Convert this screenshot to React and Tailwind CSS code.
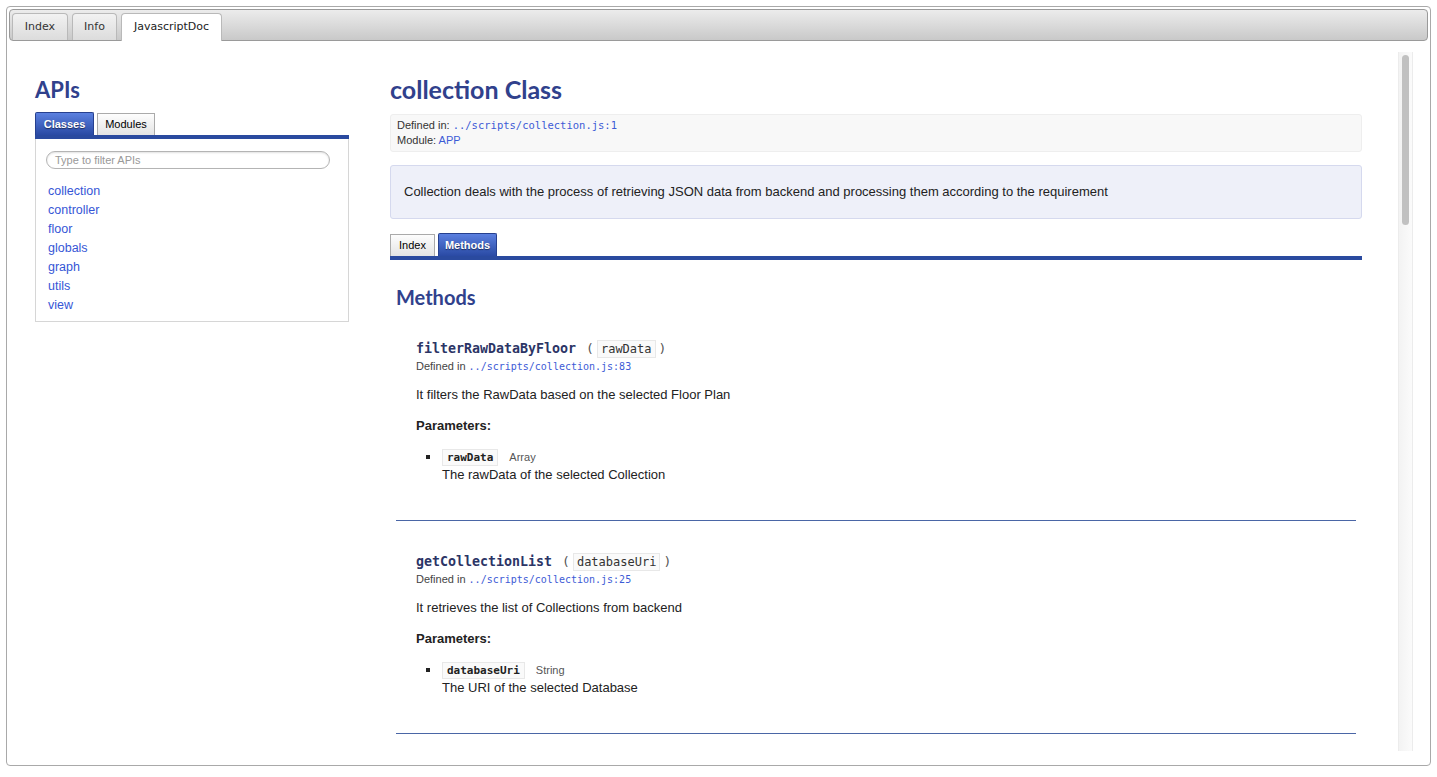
import React from 'react';

const classes = ['collection', 'controller', 'floor', 'globals', 'graph', 'utils', 'view'];

const methods = [
  {
    name: 'filterRawDataByFloor',
    param: 'rawData',
    line: '../scripts/collection.js:83',
    desc: 'It filters the RawData based on the selected Floor Plan',
    type: 'Array',
    paramDesc: 'The rawData of the selected Collection',
  },
  {
    name: 'getCollectionList',
    param: 'databaseUri',
    line: '../scripts/collection.js:25',
    desc: 'It retrieves the list of Collections from backend',
    type: 'String',
    paramDesc: 'The URI of the selected Database',
  },
];

const topTabs = [
  { label: 'Index', w: 'w-[56px]' },
  { label: 'Info', w: 'w-[45px]' },
];

const sans = { fontFamily: '"Liberation Sans", Arial, sans-serif' };
const mono = { fontFamily: '"DejaVu Sans Mono", "Liberation Mono", monospace' };
const heading = { fontFamily: 'Lato, "Open Sans", sans-serif' };
const verdana = { fontFamily: '"DejaVu Sans", Verdana, sans-serif' };

const BlueTab = ({ children, w }) => (
  <div
    className={`${w} h-[23px] flex items-center justify-center rounded-t-[2px] border border-b-0 border-[#26408f] bg-gradient-to-b from-[#5b80e0] to-[#2a4aa4] text-[11px] font-bold text-white [text-shadow:0_1px_1px_rgba(0,0,0,0.5)]`}
  >
    {children}
  </div>
);

const GrayTab = ({ children, w }) => (
  <div
    className={`${w} h-[22px] flex items-center justify-center border border-b-0 border-[#aaa] bg-gradient-to-b from-[#fdfdfd] to-[#e4e4e4] text-[11px] text-black`}
  >
    {children}
  </div>
);

const Method = ({ m, first }) => (
  <div>
    <div className={`pl-5 pb-[36px] ${first ? 'pt-0' : 'pt-[32px]'}`}>
      <div className="flex items-center h-[18px] text-[13px] text-[#333]">
        <span style={mono} className="font-bold text-[13.3px] text-[#2c3566]">{m.name}</span>
        <span style={mono} className="ml-[10px] mr-[3px] text-[#555]">(</span>
        <span style={mono} className="border border-[#e8e8e8] bg-[#fafafa] px-[3px] text-[12px] leading-[16px] text-[#333]">
          {m.param}
        </span>
        <span style={mono} className="ml-[3px] text-[#555]">)</span>
      </div>
      <div className="h-[14px] leading-[14px] text-[11px] text-[#444] mt-[1px]">
        Defined in <span style={mono} className="text-[10px] text-[#3d5bd6]">{m.line}</span>
      </div>
      <p className="mt-[13px] text-[13px] leading-[18px] text-[#222]">{m.desc}</p>
      <p className="mt-[13px] text-[13px] leading-[18px] font-bold text-[#222]">Parameters:</p>
      <div className="mt-[13px] pl-[10px] flex">
        <div className="w-[16px] pt-[7px]">
          <div className="w-[4px] h-[4px] bg-[#222]" />
        </div>
        <div>
          <div className="flex items-center h-[18px]">
            <span style={mono} className="border border-[#e8e8e8] bg-[#fafafa] px-[4px] text-[11px] leading-[15px] font-bold text-[#222]">
              {m.param}
            </span>
            <span className="ml-[11px] text-[11px] text-[#555]">{m.type}</span>
          </div>
          <p className="text-[13px] leading-[18px] text-[#222]">{m.paramDesc}</p>
        </div>
      </div>
    </div>
    <div className="h-px bg-[#4a66a6]" />
  </div>
);

export default function App() {
  return (
    <div style={sans} className="w-[1437px] h-[777px] bg-white p-[6px] pb-[11px]">
      <div className="h-full rounded-[4px] border border-[#a9a9a9] p-[2px] flex flex-col">
        <div className="h-[32px] shrink-0 rounded-[4px] border border-[#9a9a9a] bg-gradient-to-b from-[#ececec] to-[#c9c9c9] flex items-end pl-[2px] gap-[4px]">
          {topTabs.map(t => (
            <div
              key={t.label}
              style={verdana}
              className={`${t.w} h-[27px] flex items-center justify-center rounded-t-[4px] border border-b-0 border-[#b9b9b9] bg-gradient-to-b from-[#f2f2f2] to-[#dcdcdc] text-[11px] text-[#333]`}
            >
              {t.label}
            </div>
          ))}
          <div
            style={verdana}
            className="w-[101px] h-[28px] -mb-px flex items-center justify-center rounded-t-[4px] border border-b-0 border-[#b9b9b9] bg-white text-[11px] text-[#222]"
          >
            JavascriptDoc
          </div>
        </div>

        <div className="flex-1 flex pt-[11px] pb-[12px] pr-[15px] min-h-0">
          <div className="flex-1 overflow-hidden flex pl-[26px]">
            {/* left column */}
            <div className="w-[314px] shrink-0">
              <h2 style={heading} className="mt-[24px] text-[22px] leading-[28px] font-bold text-[#30418c]">APIs</h2>
              <div className="mt-[8px] flex items-end gap-[3px]">
                <BlueTab w="w-[59px]">Classes</BlueTab>
                <GrayTab w="w-[58px]">Modules</GrayTab>
              </div>
              <div className="h-[4px] bg-[#2a4a9f]" />
              <div className="h-[183px] border border-t-0 border-[#d6d6d6] px-[10px] pt-[12px]">
                <div className="w-[284px] h-[18px] rounded-full border border-[#b4b4b4] shadow-[inset_0_1px_2px_rgba(0,0,0,0.12)] flex items-center pl-[8px] text-[11px] text-[#999]">
                  Type to filter APIs
                </div>
                <ul className="mt-[13px] pl-[2px]">
                  {classes.map(c => (
                    <li key={c} className="text-[12.5px] leading-[19px] text-[#3656d6]">{c}</li>
                  ))}
                </ul>
              </div>
            </div>

            {/* right column */}
            <div className="w-[972px] shrink-0 ml-[41px]">
              <h1 style={heading} className="mt-[22px] text-[25px] leading-[30px] font-bold text-[#30418c]">collection Class</h1>
              <div className="mt-[10px] rounded-[3px] border border-[#eee] bg-[#f8f8f8] px-[6px] py-[3px] text-[11px] leading-[15px] text-[#333]">
                <div>
                  Defined in: <span style={mono} className="text-[10.5px] text-[#3d5bd6]">../scripts/collection.js:1</span>
                </div>
                <div>
                  Module: <span className="text-[#3d5bd6]">APP</span>
                </div>
              </div>
              <div className="mt-[13px] rounded-[3px] border border-[#d5d9ee] bg-[#eef0f9] px-[13px] py-[16px] text-[13px] leading-[20px] text-[#222]">
                Collection deals with the process of retrieving JSON data from backend and processing them according to the requirement
              </div>
              <div className="mt-[14px] flex items-end gap-[3px]">
                <GrayTab w="w-[45px]">Index</GrayTab>
                <BlueTab w="w-[59px]">Methods</BlueTab>
              </div>
              <div className="h-[4px] bg-[#2a4a9f]" />
              <div className="px-[6px]">
                <h2 style={heading} className="mt-[24px] text-[20px] leading-[26px] font-bold text-[#30418c]">Methods</h2>
                <div className="mt-[30px]">
                  {methods.map((m, i) => (
                    <Method key={m.name} m={m} first={i === 0} />
                  ))}
                </div>
              </div>
            </div>
          </div>

          {/* scrollbar */}
          <div className="w-[15px] shrink-0 ml-[35px] border-x border-[#ececec] bg-gradient-to-r from-[#f3f3f3] to-[#fbfbfb] pt-[3px] px-[3px]">
            <div className="h-[170px] rounded-full bg-[#c1c1c1]" />
          </div>
        </div>
      </div>
    </div>
  );
}
